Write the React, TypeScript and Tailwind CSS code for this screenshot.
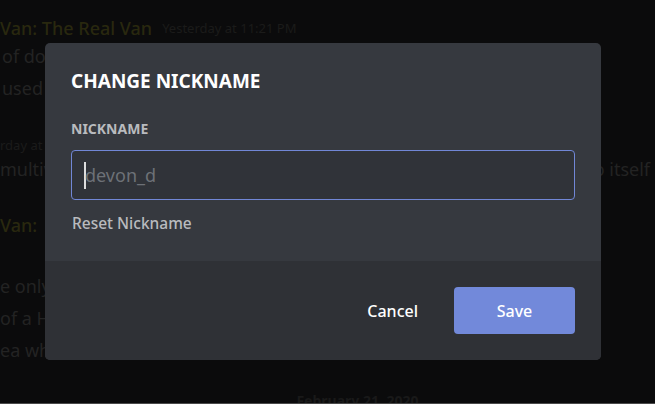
import React from "react";

function BackgroundChat() {
  return (
    <div className="flex flex-col pt-[14px] text-[18px] text-[#232323]">
      <div className="flex h-[28px] shrink-0 items-center gap-[10px] leading-[28px]">
        <span className="font-medium text-[#29280f]">Van: The Real Van</span>
        <span className="text-[13px] text-[#1b1b1a]">Yesterday at 11:21 PM</span>
      </div>
      <div className="flex h-[28px] shrink-0 items-center pl-[2px]">of do</div>
      <div className="flex h-[36px] shrink-0 items-center pl-[2px]">used</div>
      <div className="mt-[28px] flex h-[24px] shrink-0 items-center text-[13px] text-[#1b1b1b]">rday at</div>
      <div className="flex h-[22px] shrink-0 items-center justify-between pr-[5px]">
        <span>multive</span>
        <span>o itself</span>
      </div>
      <div className="mt-[31px] flex h-[28px] shrink-0 items-center font-medium text-[#29280f]">Van:</div>
      <div className="mt-[31px] flex h-[32px] shrink-0 items-center">e only</div>
      <div className="flex h-[32px] shrink-0 items-center">of a Ha</div>
      <div className="flex h-[32px] shrink-0 items-center">ea wh</div>
      <div className="mt-[16px] flex h-[36px] shrink-0 items-center justify-center pl-[60px] text-[14px] font-bold text-[#191919]">
        February 21, 2020
      </div>
    </div>
  );
}

function NicknameModal() {
  return (
    <div className="absolute left-[45px] top-[43px] flex h-[317px] w-[556px] flex-col overflow-hidden rounded-[5px] bg-[#36393f]">
      <div className="flex flex-1 flex-col px-[26px] pt-[26px]">
        <h2 className="text-[19px] font-bold leading-[24px] text-white">CHANGE NICKNAME</h2>
        <div className="mt-[28px] text-[14px] font-bold leading-[16px] text-[#b9bbbe]">NICKNAME</div>
        <div className="mt-[13px] flex h-[50px] items-center rounded-[4px] border border-[#7187d6] bg-[#303339] pl-[12px]">
          <span className="h-[27px] w-[2px] bg-[#dcddde]" />
          <span className="-ml-px text-[18px] text-[#6d7177]">devon_d</span>
        </div>
        <button className="mt-[13px] self-start pl-px text-[15.5px] font-medium leading-[20px] text-[#b9bbbe]">
          Reset Nickname
        </button>
      </div>
      <div className="flex h-[99px] items-center justify-end gap-[36px] bg-[#2f3136] pr-[26px]">
        <button className="text-[16px] font-medium text-white">Cancel</button>
        <button className="h-[47px] w-[121px] rounded-[4px] bg-[#7289da] text-[16px] font-medium text-white">
          Save
        </button>
      </div>
    </div>
  );
}

export default function App() {
  return (
    <div className="relative h-[404px] w-[655px] overflow-hidden border-b border-[#4a4a4a] bg-[#0b0b0c] font-['Noto_Sans',sans-serif]">
      <BackgroundChat />
      <NicknameModal />
    </div>
  );
}
